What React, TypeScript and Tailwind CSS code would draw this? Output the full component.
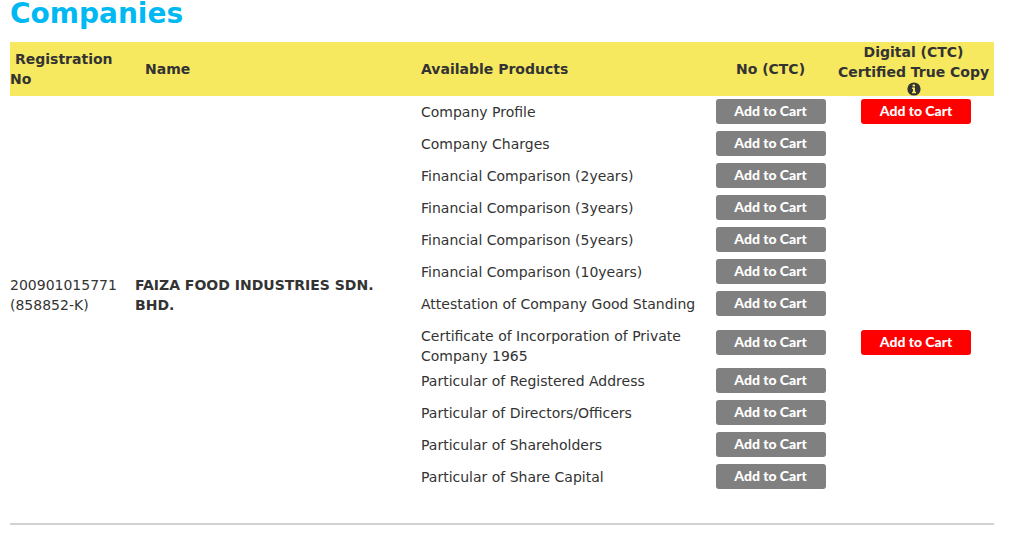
type Product = { name: string; digital?: boolean };

const products: Product[] = [
  { name: 'Company Profile', digital: true },
  { name: 'Company Charges' },
  { name: 'Financial Comparison (2years)' },
  { name: 'Financial Comparison (3years)' },
  { name: 'Financial Comparison (5years)' },
  { name: 'Financial Comparison (10years)' },
  { name: 'Attestation of Company Good Standing' },
  { name: 'Certificate of Incorporation of Private Company 1965', digital: true },
  { name: 'Particular of Registered Address' },
  { name: 'Particular of Directors/Officers' },
  { name: 'Particular of Shareholders' },
  { name: 'Particular of Share Capital' },
];

function CartButton({ product, digital = false }: { product: string; digital?: boolean }) {
  return (
    <button
      type="button"
      title={product}
      className={`mx-auto block h-[25px] w-[110px] rounded-[3px] pb-px font-[Lato,'Open_Sans',sans-serif] text-sm leading-6 font-black text-white ${
        digital ? 'bg-[#ff0000]' : 'bg-[#808080]'
      }`}
    >
      Add to Cart
    </button>
  );
}

function InfoIcon() {
  return (
    <svg viewBox="0 0 14 14" className="mx-auto block size-[14px]" aria-hidden="true">
      <circle cx="7" cy="7" r="6.6" fill="#333333" />
      <path d="M5.6 2.6h2.4v1.9H5.6zM5 5.4h3v4.3h1v1.5H5V9.700h1V6.900H5z" fill="#f6e960" />
    </svg>
  );
}

export default function App() {
  return (
    <main className="pr-[33px] pl-[10px] font-['DejaVu_Sans',Verdana,sans-serif] text-sm leading-5 text-[#333333]">
      <h1 className="pb-[14px] text-[28px] leading-7 font-bold text-[#00b9f2]">Companies</h1>
      <table className="w-full table-fixed border-collapse">
        <colgroup>
          <col className="w-[125px]" />
          <col />
          <col className="w-[287px]" />
          <col className="w-[125px]" />
          <col className="w-[161px]" />
        </colgroup>
        <thead>
          <tr className="h-[54px] bg-[#f6e960] text-left">
            <th className="p-0 indent-[5px]">Registration No</th>
            <th className="px-[10px] py-0">Name</th>
            <th className="p-0">Available Products</th>
            <th className="p-0 text-center">No (CTC)</th>
            <th className="p-0 text-center">
              Digital (CTC) Certified True Copy
              <InfoIcon />
            </th>
          </tr>
        </thead>
        <tbody>
          {products.map((product, index) => (
            <tr key={product.name} className="h-8">
              {index === 0 && (
                <>
                  <td rowSpan={products.length} className="p-0">
                    200901015771
                    <br />
                    (858852-K)
                  </td>
                  <td rowSpan={products.length} className="py-0 pr-5 font-bold">
                    FAIZA FOOD INDUSTRIES SDN. BHD.
                  </td>
                </>
              )}
              <td className="p-0 align-top">
                <p className="-mb-px pt-[6px]">{product.name}</p>
              </td>
              <td className="p-0 pb-px">
                <CartButton product={product.name} />
              </td>
              <td className="pt-0 pb-px pl-[5px]">
                {product.digital && <CartButton product={product.name} digital />}
              </td>
            </tr>
          ))}
        </tbody>
      </table>
      <hr className="mt-[30px] border-t-2 border-[#d2d2d2]" />
    </main>
  );
}
